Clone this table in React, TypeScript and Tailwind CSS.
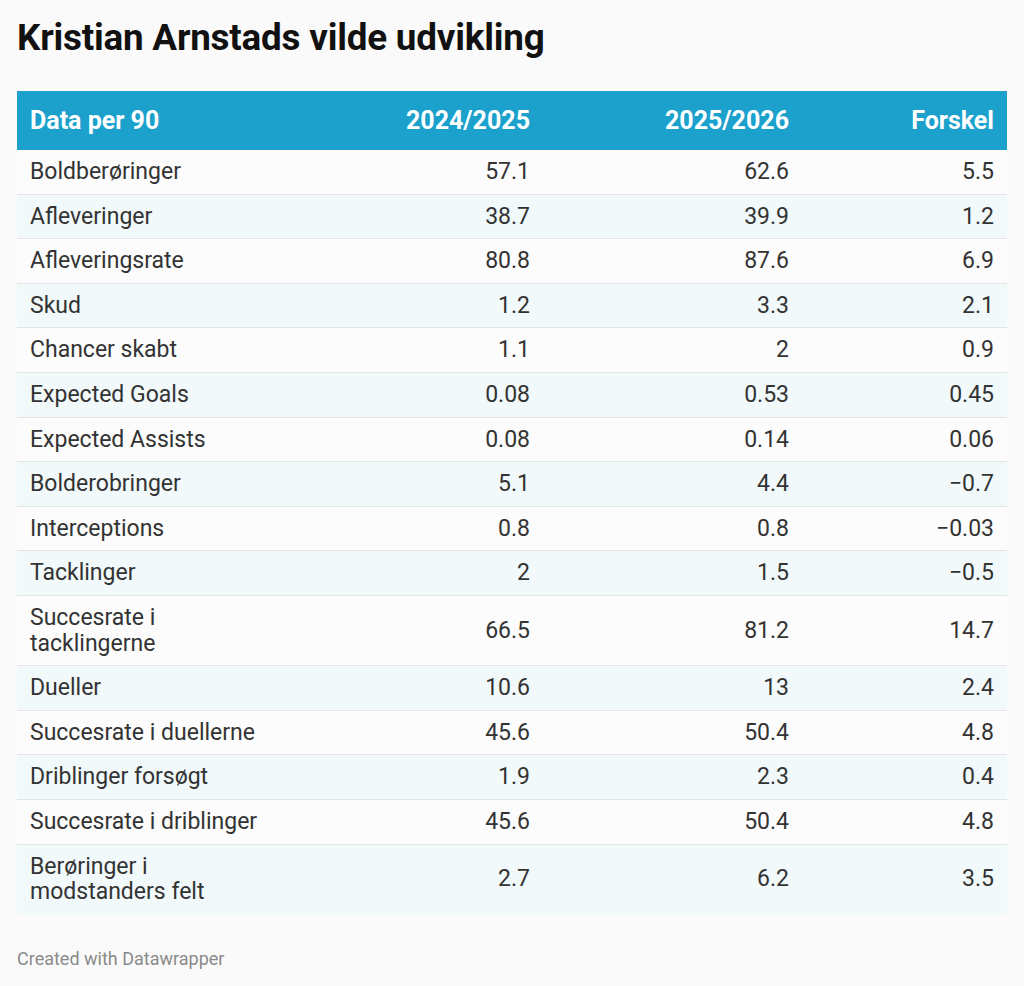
import React from 'react';

type Row = { label: string; a: string; b: string; diff: string };

const rows: Row[] = [
  { label: 'Boldberøringer', a: '57.1', b: '62.6', diff: '5.5' },
  { label: 'Afleveringer', a: '38.7', b: '39.9', diff: '1.2' },
  { label: 'Afleveringsrate', a: '80.8', b: '87.6', diff: '6.9' },
  { label: 'Skud', a: '1.2', b: '3.3', diff: '2.1' },
  { label: 'Chancer skabt', a: '1.1', b: '2', diff: '0.9' },
  { label: 'Expected Goals', a: '0.08', b: '0.53', diff: '0.45' },
  { label: 'Expected Assists', a: '0.08', b: '0.14', diff: '0.06' },
  { label: 'Bolderobringer', a: '5.1', b: '4.4', diff: '−0.7' },
  { label: 'Interceptions', a: '0.8', b: '0.8', diff: '−0.03' },
  { label: 'Tacklinger', a: '2', b: '1.5', diff: '−0.5' },
  { label: 'Succesrate i tacklingerne', a: '66.5', b: '81.2', diff: '14.7' },
  { label: 'Dueller', a: '10.6', b: '13', diff: '2.4' },
  { label: 'Succesrate i duellerne', a: '45.6', b: '50.4', diff: '4.8' },
  { label: 'Driblinger forsøgt', a: '1.9', b: '2.3', diff: '0.4' },
  { label: 'Succesrate i driblinger', a: '45.6', b: '50.4', diff: '4.8' },
  { label: 'Berøringer i modstanders felt', a: '2.7', b: '6.2', diff: '3.5' },
];

const cols = 'grid grid-cols-[260px_266px_259px_205px]';

export default function App() {
  return (
    <div className="min-h-[986px] w-[1024px] bg-[#fafafa] px-[17px] pt-[16px] font-['Roboto','Liberation_Sans',sans-serif] text-[#333]">
      {/* Title */}
      <h1 className="text-[36.8px] font-bold leading-[44px] tracking-[-0.2px] text-[#111]">
        Kristian Arnstads vilde udvikling
      </h1>

      {/* Table */}
      <div className="mt-[31px] w-[990px]">
        <div className={`${cols} h-[59px] items-center bg-[#1ba1cc] text-[25px] font-bold text-white`}>
          <div className="pl-[13px]">Data per 90</div>
          <div className="pr-[13px] text-right">2024/2025</div>
          <div className="pr-[13px] text-right">2025/2026</div>
          <div className="pr-[13px] text-right">Forskel</div>
        </div>
        {rows.map((r, i) => (
          <div
            key={r.label}
            className={`${cols} items-center text-[23px] leading-[25.6px] ${
              i % 2 === 0 ? 'bg-[#fcfcfc]' : 'bg-[#f1f9fb]'
            } ${i < rows.length - 1 ? 'border-b border-[#e4e4e4]' : ''} py-[9px]`}
          >
            <div className="pl-[13px] pr-[7px]">{r.label}</div>
            <div className="pr-[13px] text-right">{r.a}</div>
            <div className="pr-[13px] text-right">{r.b}</div>
            <div className="pr-[13px] text-right">{r.diff}</div>
          </div>
        ))}
      </div>

      {/* Footer */}
      <div className="mt-[33px] text-[18px] leading-[24px] text-[#8a8a8a]">Created with Datawrapper</div>
    </div>
  );
}
